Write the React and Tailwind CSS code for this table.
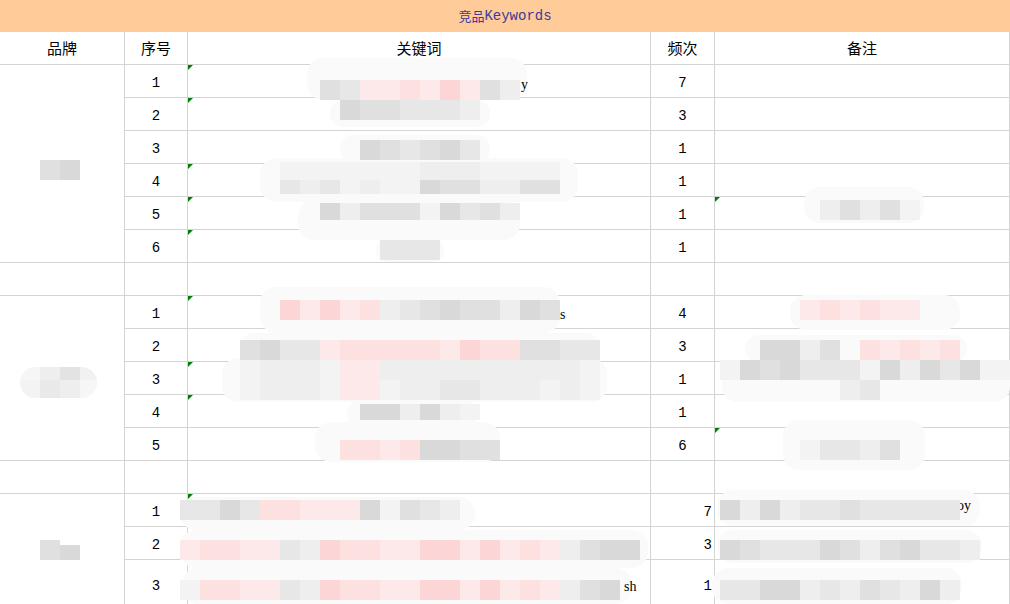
import React from "react";

const TONE = {
  a: "bg-[#d9d9d9]",
  b: "bg-[#e0e0e0]",
  c: "bg-[#e7e7e7]",
  d: "bg-[#eeeeee]",
  e: "bg-[#f3f3f3]",
  w: "bg-[#fafafa]",
  p: "bg-[#fde0e0]",
  q: "bg-[#fde9e9]",
  r: "bg-[#fcd6d6]",
};

// redaction smudges: soft shapes first, pixel strips on top
const SHAPES = [
  [307, 58, 220, 42], [330, 100, 160, 27], [340, 135, 150, 27], [260, 158, 318, 44],
  [298, 200, 222, 40], [376, 238, 68, 24], [804, 187, 120, 36],
  [260, 287, 300, 46], [240, 333, 360, 30], [222, 358, 385, 44], [347, 400, 130, 28], [315, 422, 185, 40],
  [790, 295, 170, 35], [745, 335, 222, 27], [722, 360, 288, 42], [783, 420, 142, 50],
  [180, 497, 295, 33], [180, 530, 468, 38], [182, 568, 450, 36],
  [717, 490, 263, 36], [717, 530, 265, 33], [712, 568, 250, 36],
];

const STRIPS = [
  { x: 320, y: 80, t: "bcqqpqrqbd" },
  { x: 340, y: 100, t: "abbcccd" },
  { x: 360, y: 140, t: "abcbac" },
  { x: 280, y: 162, h: 18, t: "eeeeeeedddeeee" },
  { x: 280, y: 180, h: 14, t: "cdcedeeabbddbb" },
  { x: 320, y: 203, h: 17, t: "adbbbeacbd" },
  { x: 380, y: 240, t: "ccc" },
  { x: 40, y: 160, t: "ba" },
  { x: 820, y: 200, t: "dbdbe" },
  { x: 280, y: 300, t: "rqrqpdcbabbdab" },
  { x: 240, y: 340, t: "baccqpppppqrppbbcc" },
  { x: 240, y: 360, t: "edddeqqdddddddddde" },
  { x: 240, y: 380, t: "edddeqqeddccdddede" },
  { x: 360, y: 404, h: 16, t: "aadade" },
  { x: 340, y: 440, t: "ppqpaabb" },
  { x: 800, y: 300, t: "qpqpqq" },
  { x: 760, y: 340, t: "aadbwpqpqp" },
  { x: 720, y: 360, t: "eabacccеadacaee" },
  { x: 840, y: 380, t: "dc" },
  { x: 800, y: 440, t: "eccdb" },
  { x: 180, y: 500, t: "ccacppqqqaebcd" },
  { x: 180, y: 540, t: "qppqqcdrppqqrrqrqpqdbaa" },
  { x: 180, y: 580, t: "eppqqcdrppqqrrqrqpqdba" },
  { x: 720, y: 500, t: "adadccbccccc" },
  { x: 720, y: 540, t: "abcccabdbaccd" },
  { x: 720, y: 580, t: "ccaadcdbcdad" },
  { x: 40, y: 540, t: "b" },
  { x: 60, y: 545, h: 15, t: "a" },
];

const SCRAPS = [
  { x: 521, y: 72, t: "y" },
  { x: 560, y: 302, t: "s" },
  { x: 624, y: 574, t: "sh" },
  { x: 957, y: 493, t: "oy" },
];

const GROUPS = [
  {
    rows: [
      { n: 1, f: 7, tri: true },
      { n: 2, f: 3, tri: true },
      { n: 3, f: 1 },
      { n: 4, f: 1, tri: true },
      { n: 5, f: 1, tri: true, noteTri: true },
      { n: 6, f: 1, tri: true },
    ],
  },
  {
    rows: [
      { n: 1, f: 4, tri: true },
      { n: 2, f: 3 },
      { n: 3, f: 1, tri: true },
      { n: 4, f: 1, tri: true },
      { n: 5, f: 6, noteTri: true },
    ],
  },
  {
    right: true,
    last: true,
    rows: [
      { n: 1, f: 7, tri: true },
      { n: 2, f: 3 },
      { n: 3, f: 1, tall: true },
    ],
  },
];

function Flag() {
  return (
    <span className="absolute left-0 top-0 h-[5px] w-[5px] bg-[#008000] [clip-path:polygon(0_0,100%_0,0_100%)]" />
  );
}

function Row({ row, right }) {
  return (
    <div
      className={`flex border-b border-[#d4d4d4] ${row.tall ? "h-[50px]" : "h-[33px]"}`}
    >
      <div className="flex w-[63px] items-center justify-center border-r border-[#d4d4d4] pt-[4px]">
        {row.n}
      </div>
      <div className="relative w-[463px] border-r border-[#d4d4d4]">
        {row.tri && <Flag />}
      </div>
      <div
        className={`flex w-[64px] items-center border-r border-[#d4d4d4] pt-[4px] ${
          right ? "justify-end pr-[2px]" : "justify-center"
        }`}
      >
        {row.f}
      </div>
      <div className="relative w-[295px] border-r border-[#d4d4d4]">
        {row.noteTri && <Flag />}
      </div>
    </div>
  );
}

function Blank() {
  return (
    <div className="flex h-[33px] border-b border-[#d4d4d4]">
      <div className="w-[125px] border-r border-[#d4d4d4]" />
      <div className="w-[63px] border-r border-[#d4d4d4]" />
      <div className="w-[463px] border-r border-[#d4d4d4]" />
      <div className="w-[64px] border-r border-[#d4d4d4]" />
      <div className="w-[295px] border-r border-[#d4d4d4]" />
    </div>
  );
}

export default function App() {
  return (
    <div className="relative h-[604px] w-[1010px] overflow-hidden bg-white font-['Liberation_Mono','Noto_Sans_CJK_SC',monospace] text-[14px] text-black">
      <div className="flex h-8 items-center justify-center bg-[#ffcc99] text-[#3b3b99]">
        <span className="font-['Noto_Sans_CJK_SC',sans-serif] text-[13px]">竞品</span>
        <span>Keywords</span>
      </div>

      <div className="flex h-[33px] border-b border-[#d4d4d4] font-['Noto_Sans_CJK_SC',sans-serif] text-[15px]">
        <div className="flex w-[125px] items-center justify-center border-r border-[#d4d4d4]">品牌</div>
        <div className="flex w-[63px] items-center justify-center border-r border-[#d4d4d4]">序号</div>
        <div className="flex w-[463px] items-center justify-center border-r border-[#d4d4d4]">关键词</div>
        <div className="flex w-[64px] items-center justify-center border-r border-[#d4d4d4]">频次</div>
        <div className="flex w-[295px] items-center justify-center border-r border-[#d4d4d4]">备注</div>
      </div>

      {GROUPS.map((g, i) => (
        <React.Fragment key={i}>
          <div className="flex">
            <div
              className={`w-[125px] border-r border-[#d4d4d4] ${g.last ? "" : "border-b"}`}
            />
            <div className="flex w-[885px] flex-col">
              {g.rows.map((r) => (
                <Row key={r.n} row={r} right={g.right} />
              ))}
            </div>
          </div>
          {!g.last && <Blank />}
        </React.Fragment>
      ))}

      <div className="pointer-events-none absolute inset-0">
        {SHAPES.map(([x, y, w, h], i) => (
          <div
            key={i}
            className="absolute rounded-[16px] bg-[#fafafa]"
            style={{ left: x, top: y, width: w, height: h }}
          />
        ))}
        {SCRAPS.map((s, i) => (
          <span
            key={i}
            className="absolute font-['Liberation_Serif',serif] text-[14px] leading-none"
            style={{ left: s.x, top: s.y + 6 }}
          >
            {s.t}
          </span>
        ))}
        {STRIPS.map((s, i) => (
          <div
            key={i}
            className="absolute flex"
            style={{ left: s.x, top: s.y, height: s.h || 20 }}
          >
            {s.t.split("").map((c, j) => (
              <span key={j} className={`h-full w-5 ${TONE[c] || TONE.e}`} />
            ))}
          </div>
        ))}

        {/* second brand name: pill-shaped smudge */}
        <div className="absolute left-[20px] top-[367px] flex h-[31px] w-[77px] flex-col overflow-hidden rounded-full">
          <div className="flex h-[13px]">
            <span className="w-5 bg-[#f6f6f6]" />
            <span className="w-5 bg-[#eeeeee]" />
            <span className="w-5 bg-[#e3e3e3]" />
            <span className="w-[17px] bg-[#f1f1f1]" />
          </div>
          <div className="flex flex-1">
            <span className="w-5 bg-[#f3f3f3]" />
            <span className="w-5 bg-[#e9e9e9]" />
            <span className="w-5 bg-[#eeeeee]" />
            <span className="w-[17px] bg-[#f6f6f6]" />
          </div>
        </div>
      </div>
    </div>
  );
}
